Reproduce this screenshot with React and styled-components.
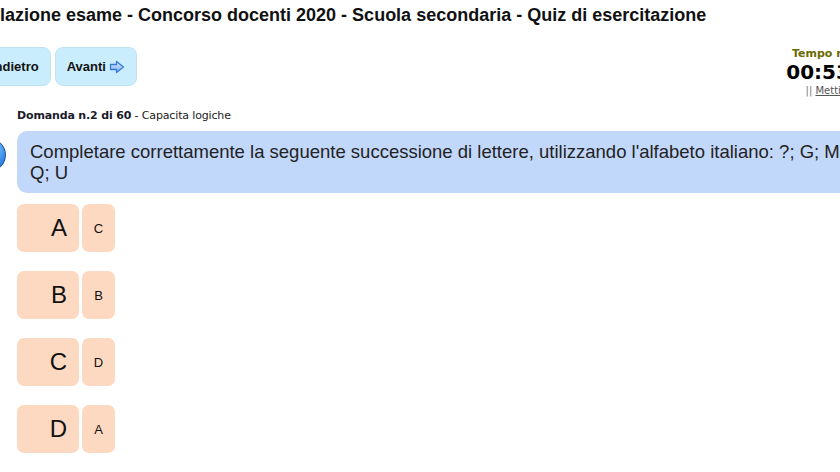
import React from "react";
import styled, { createGlobalStyle } from "styled-components";

const GlobalStyle = createGlobalStyle`
  body {
    margin: 0;
    background: #fff;
    overflow: hidden;
    font-family: "Liberation Sans", Arial, sans-serif;
  }
`;

const Page = styled.div`
  margin-left: -44px;
  width: 960px;
`;

const Title = styled.h1`
  margin: 0;
  padding-top: 4px;
  font-size: 18px;
  line-height: 22px;
  font-weight: 700;
  color: #111;
`;

const Toolbar = styled.div`
  display: flex;
  justify-content: space-between;
  align-items: flex-start;
  margin-top: 21px;
  padding-right: 5px;
`;

const NavGroup = styled.div`
  display: flex;
  gap: 4px;
  margin-left: 4px;
`;

const NavButton = styled.button`
  display: flex;
  align-items: center;
  gap: 3px;
  height: 39px;
  padding: 0 11px;
  border: 1px solid #bfe2f2;
  border-radius: 8px;
  background: #c9edfd;
  font-family: "Liberation Sans", Arial, sans-serif;
  font-size: 13px;
  font-weight: 700;
  color: #111;
`;

const Timer = styled.div`
  width: 130px;
  text-align: center;
  font-family: "DejaVu Sans", Verdana, sans-serif;
`;

const TimerLabel = styled.div`
  font-size: 11px;
  font-weight: 700;
  color: #6b6b00;
  line-height: 13px;
`;

const TimerValue = styled.div`
  padding-right: 20px;
  font-size: 20px;
  font-weight: 700;
  color: #000;
  line-height: 24px;
`;

const TimerPause = styled.div`
  font-size: 10px;
  color: #777;
  line-height: 13px;
  a {
    color: #555;
    text-decoration: underline;
  }
`;

const Content = styled.div`
  padding-left: 61px;
  padding-right: 44px;
`;

const Meta = styled.div`
  margin-top: 12px;
  font-family: "DejaVu Sans", Verdana, sans-serif;
  font-size: 11px;
  letter-spacing: -0.15px;
  line-height: 14px;
  color: #222;
  b {
    color: #1a1a2a;
  }
`;

const QuestionRow = styled.div`
  display: flex;
  align-items: flex-start;
  gap: 11px;
  margin-left: -45px;
  margin-top: 8px;
`;

const Ball = styled.div`
  flex: none;
  width: 32px;
  height: 32px;
  margin-top: 7px;
  border-radius: 50%;
  border: 1px solid #1d4f9a;
  background: radial-gradient(circle at 60% 30%, #bfe0ff 0%, #4a9cf0 35%, #1f6fd6 75%, #1a57ad 100%);
`;

const QuestionBox = styled.div`
  flex: 1;
  height: 62px;
  box-sizing: border-box;
  padding: 10px 13px;
  border-radius: 10px;
  background: #c2d8fb;
  font-size: 18.5px;
  line-height: 21px;
  color: #222;
`;

const Answers = styled.div`
  display: flex;
  flex-direction: column;
  gap: 19px;
  margin-top: 11px;
`;

const AnswerRow = styled.div`
  display: flex;
  gap: 3px;
`;

const Key = styled.div`
  width: 62px;
  height: 48px;
  box-sizing: border-box;
  padding-right: 12px;
  display: flex;
  align-items: center;
  justify-content: flex-end;
  border-radius: 7px;
  background: #fdd9c1;
  font-size: 24px;
  color: #111;
`;

const Choice = styled.div`
  width: 33px;
  height: 48px;
  display: flex;
  align-items: center;
  justify-content: center;
  border-radius: 7px;
  background: #fdd9c1;
  font-size: 13px;
  color: #111;
`;

const ArrowIcon = ({ flip }) => (
  <svg width="16" height="14" viewBox="0 0 16 14" style={flip ? { transform: "scaleX(-1)" } : undefined}>
    <defs>
      <linearGradient id={flip ? "ag2" : "ag1"} x1="0" y1="0" x2="0" y2="1">
        <stop offset="0" stopColor="#d8eaff" />
        <stop offset="1" stopColor="#7ab0f0" />
      </linearGradient>
    </defs>
    <path
      d="M1.5 4.5 H7.5 V1.5 L14.5 7 L7.5 12.5 V9.5 H1.5 Z"
      fill={`url(#${flip ? "ag2" : "ag1"})`}
      stroke="#3a78d4"
      strokeWidth="1.3"
      strokeLinejoin="round"
    />
  </svg>
);

const answers = [
  { key: "A", value: "C" },
  { key: "B", value: "B" },
  { key: "C", value: "D" },
  { key: "D", value: "A" },
];

export default function App() {
  return (
    <>
      <GlobalStyle />
      <Page>
        <Title>
          Simulazione esame - Concorso docenti 2020 - Scuola secondaria - Quiz di esercitazione
        </Title>
        <Toolbar>
          <NavGroup>
            <NavButton>
              <ArrowIcon flip />
              Indietro
            </NavButton>
            <NavButton>
              Avanti
              <ArrowIcon />
            </NavButton>
          </NavGroup>
          <Timer>
            <TimerLabel>Tempo rimanente</TimerLabel>
            <TimerValue>00:53:48</TimerValue>
            <TimerPause>
              || <a>Metti in pausa</a>
            </TimerPause>
          </Timer>
        </Toolbar>
        <Content>
          <Meta>
            <b>Domanda n.2 di 60</b> - Capacita logiche
          </Meta>
          <QuestionRow>
            <Ball />
            <QuestionBox>
              Completare correttamente la seguente successione di lettere, utilizzando l'alfabeto italiano: ?; G; M;
              Q; U
            </QuestionBox>
          </QuestionRow>
          <Answers>
            {answers.map((a) => (
              <AnswerRow key={a.key}>
                <Key>{a.key}</Key>
                <Choice>{a.value}</Choice>
              </AnswerRow>
            ))}
          </Answers>
        </Content>
      </Page>
    </>
  );
}
